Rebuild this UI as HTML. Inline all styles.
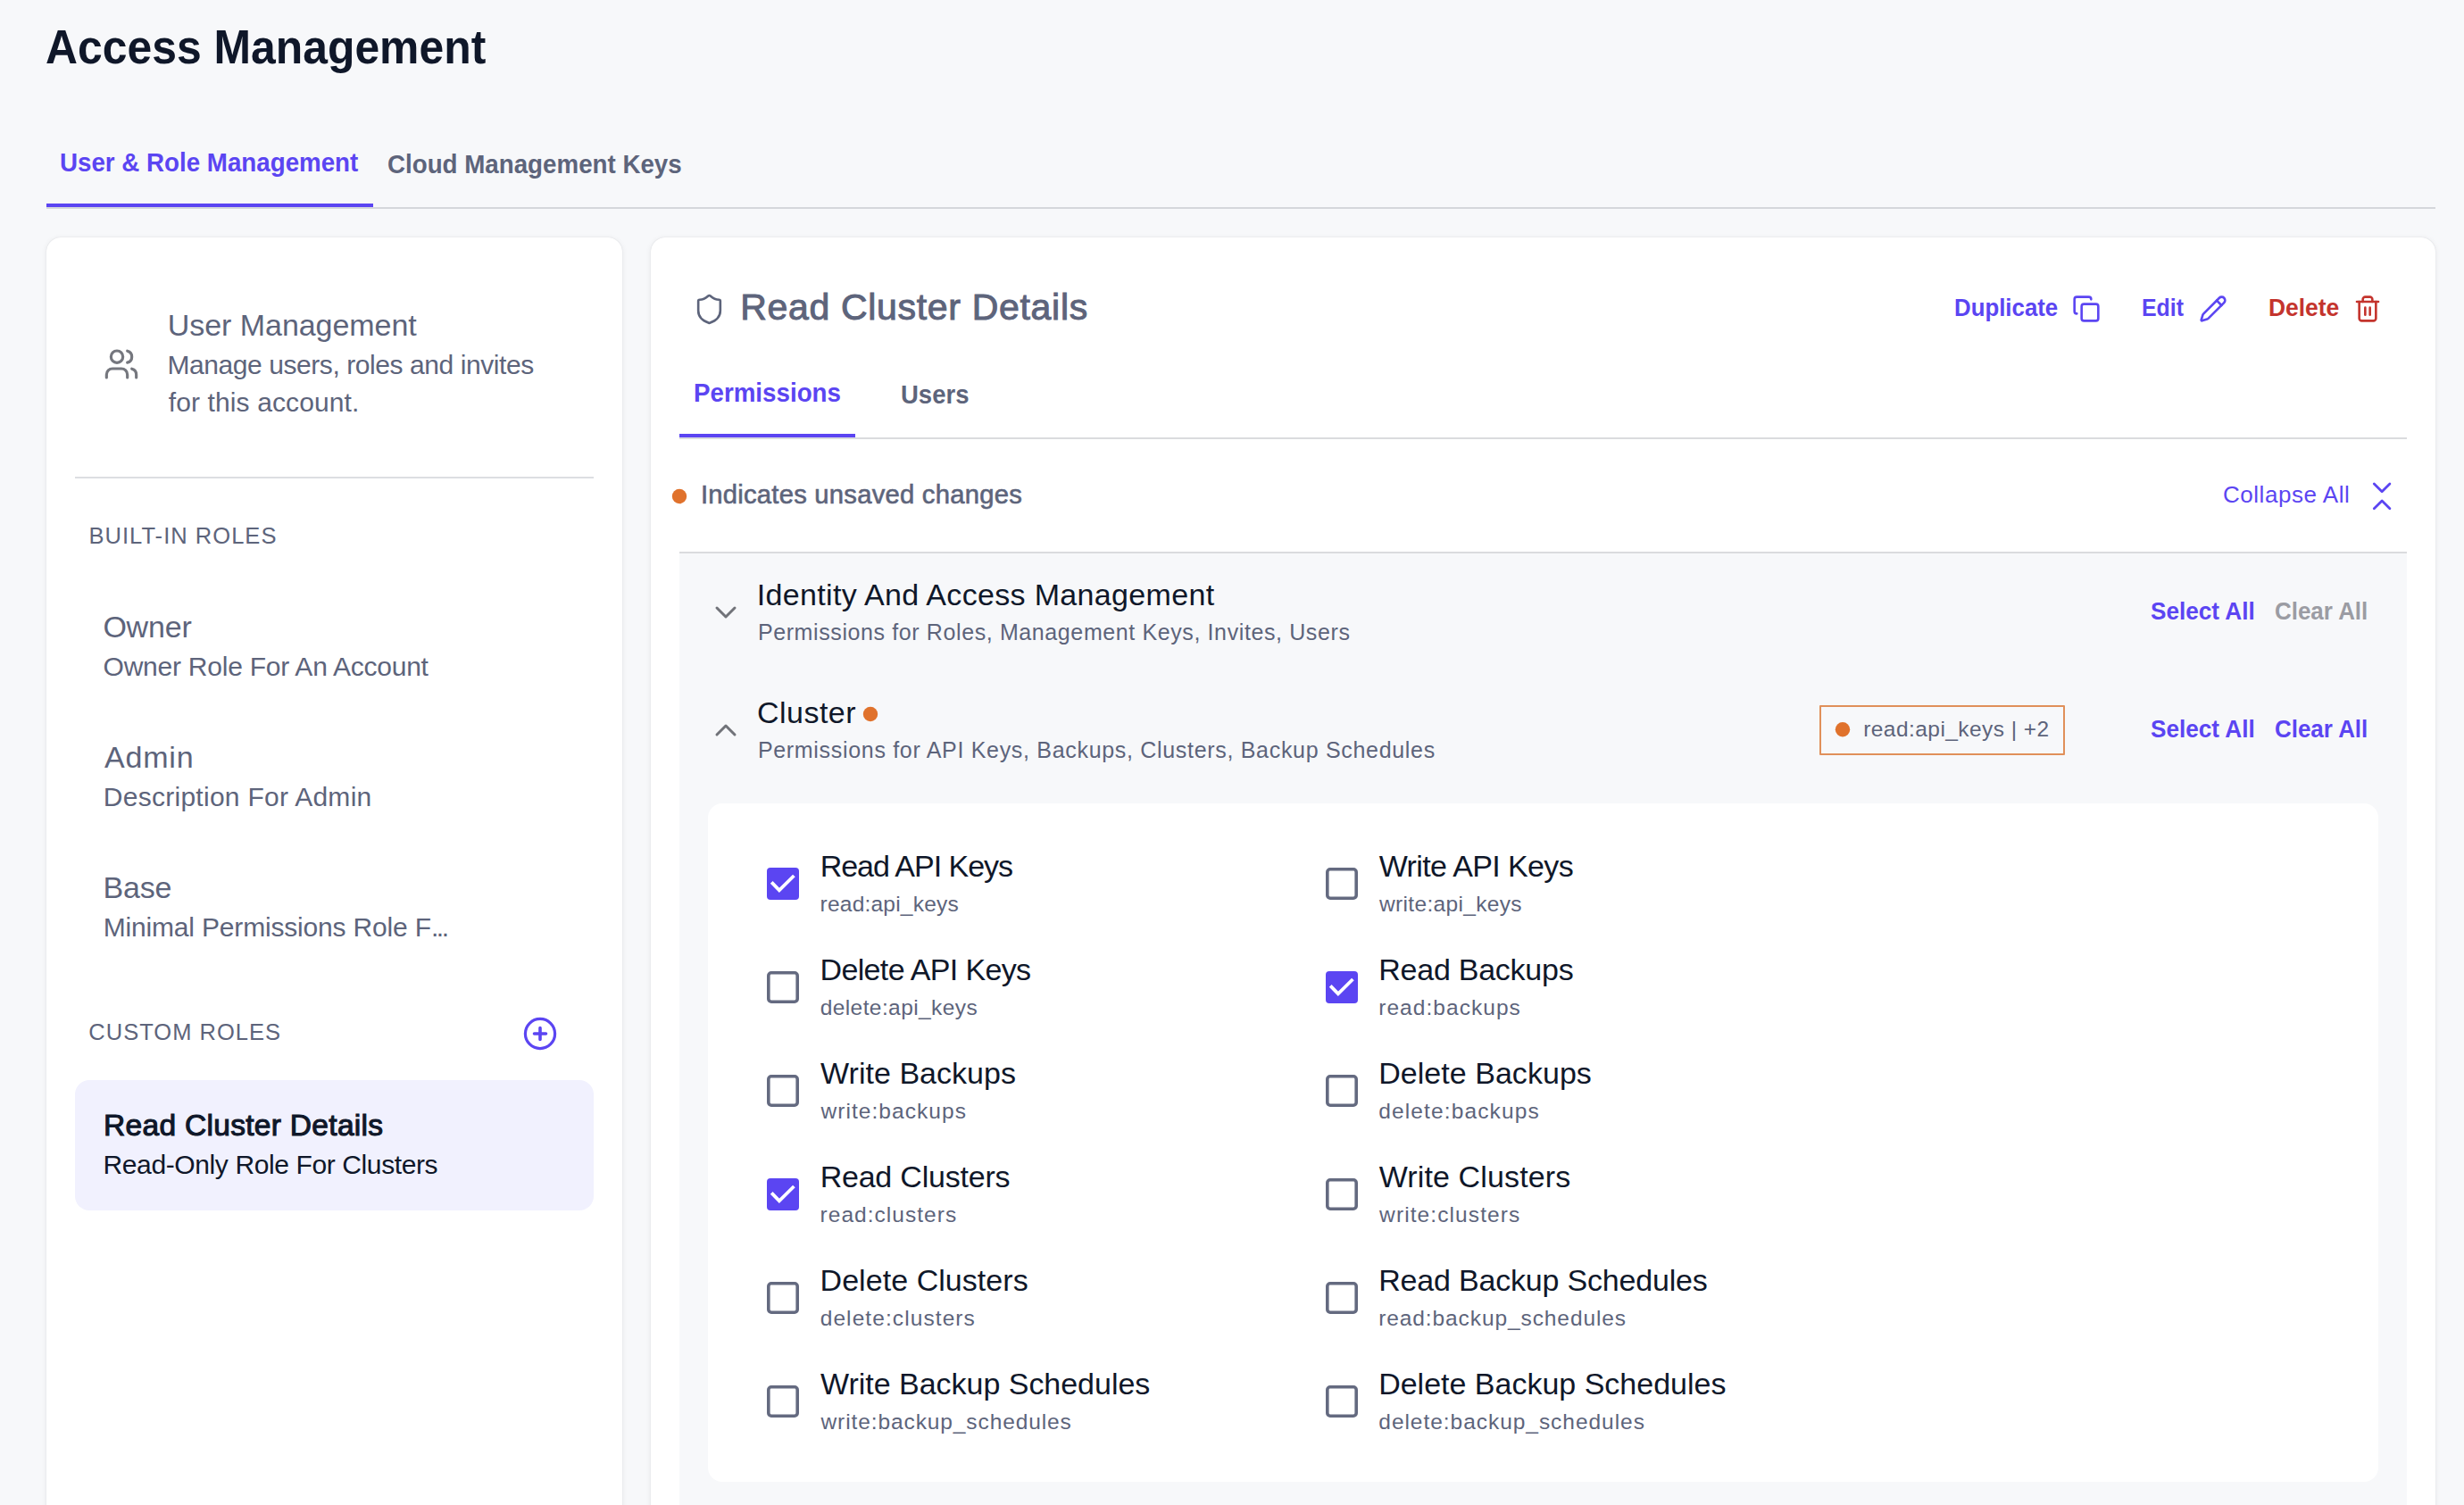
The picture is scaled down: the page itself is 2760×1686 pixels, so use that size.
<!DOCTYPE html>
<html lang="en"><head><meta charset="utf-8"><title>Access Management</title>
<style>
html,body{margin:0;padding:0;background:#f7f8fa;}
body{width:2760px;height:1686px;overflow:hidden;font-family:'Liberation Sans',Arial,Helvetica,sans-serif;}
#root{position:relative;width:2760px;height:1686px;overflow:hidden;background:#f7f8fa;}
@media (max-width:1500px){#root{zoom:.5;}body{width:1380px;height:843px;}}
.t{position:absolute;white-space:nowrap;}
</style></head><body>
<div id="root">
<div style="position:absolute;left:52px;top:232px;width:2676px;height:2px;background:#d5d7db;"></div>
<div style="position:absolute;left:52px;top:228px;width:366px;height:4px;background:#5b45f2;"></div>
<div style="position:absolute;left:52px;top:266px;width:645px;height:1500px;background:#fff;box-shadow:0 0 1px rgba(16,24,40,.16),0 1px 6px rgba(16,24,40,.08);border-radius:16px;"></div>
<div style="position:absolute;left:729px;top:266px;width:1999px;height:1500px;background:#fff;box-shadow:0 0 1px rgba(16,24,40,.16),0 1px 6px rgba(16,24,40,.08);border-radius:16px;"></div>
<div style="position:absolute;left:84px;top:534px;width:581px;height:2px;background:#dcdee2;"></div>
<div style="position:absolute;left:84px;top:1210px;width:581px;height:146px;background:#f1f1fe;border-radius:16px;"></div>
<div style="position:absolute;left:761px;top:490px;width:1935px;height:2px;background:#dadbde;"></div>
<div style="position:absolute;left:761px;top:486px;width:197px;height:4px;background:#5b45f2;"></div>
<div style="position:absolute;left:761px;top:618px;width:1935px;height:2px;background:#dadbde;"></div>
<div style="position:absolute;left:761px;top:620px;width:1935px;height:1100px;background:#f7f8fa;"></div>
<div style="position:absolute;left:793px;top:900px;width:1871px;height:760px;background:#fff;border-radius:16px;"></div>
<svg style="position:absolute;left:749px;top:544px" width="24" height="24" viewBox="749 544 24 24"><circle cx="761" cy="556" r="8.2" fill="#e0722c"/></svg>
<svg style="position:absolute;left:963px;top:788px" width="24" height="24" viewBox="963 788 24 24"><circle cx="975" cy="800" r="8.2" fill="#e0722c"/></svg>
<svg style="position:absolute;left:2052px;top:805px" width="24" height="24" viewBox="2052 805 24 24"><circle cx="2064" cy="817.2" r="8.2" fill="#e0722c"/></svg>
<div style="position:absolute;left:2038px;top:790px;width:275px;height:56px;box-sizing:border-box;border:2px solid #e0905a;border-radius:1px;"></div>
<svg style="position:absolute;left:859px;top:972px" width="36" height="36" viewBox="0 0 36 36"><rect width="36" height="36" rx="4" fill="#5b45f2"/><path d="M5.2 16.4 L13.9 25.4 L30.4 9.0" fill="none" stroke="#fff" stroke-width="3.8"/></svg>
<svg style="position:absolute;left:859px;top:1088px" width="36" height="36" viewBox="0 0 36 36"><rect x="1.8" y="1.8" width="32.4" height="32.4" rx="3.2" fill="#fff" stroke="#646a80" stroke-width="3.6"/></svg>
<svg style="position:absolute;left:859px;top:1204px" width="36" height="36" viewBox="0 0 36 36"><rect x="1.8" y="1.8" width="32.4" height="32.4" rx="3.2" fill="#fff" stroke="#646a80" stroke-width="3.6"/></svg>
<svg style="position:absolute;left:859px;top:1320px" width="36" height="36" viewBox="0 0 36 36"><rect width="36" height="36" rx="4" fill="#5b45f2"/><path d="M5.2 16.4 L13.9 25.4 L30.4 9.0" fill="none" stroke="#fff" stroke-width="3.8"/></svg>
<svg style="position:absolute;left:859px;top:1436px" width="36" height="36" viewBox="0 0 36 36"><rect x="1.8" y="1.8" width="32.4" height="32.4" rx="3.2" fill="#fff" stroke="#646a80" stroke-width="3.6"/></svg>
<svg style="position:absolute;left:859px;top:1552px" width="36" height="36" viewBox="0 0 36 36"><rect x="1.8" y="1.8" width="32.4" height="32.4" rx="3.2" fill="#fff" stroke="#646a80" stroke-width="3.6"/></svg>
<svg style="position:absolute;left:1485px;top:972px" width="36" height="36" viewBox="0 0 36 36"><rect x="1.8" y="1.8" width="32.4" height="32.4" rx="3.2" fill="#fff" stroke="#646a80" stroke-width="3.6"/></svg>
<svg style="position:absolute;left:1485px;top:1088px" width="36" height="36" viewBox="0 0 36 36"><rect width="36" height="36" rx="4" fill="#5b45f2"/><path d="M5.2 16.4 L13.9 25.4 L30.4 9.0" fill="none" stroke="#fff" stroke-width="3.8"/></svg>
<svg style="position:absolute;left:1485px;top:1204px" width="36" height="36" viewBox="0 0 36 36"><rect x="1.8" y="1.8" width="32.4" height="32.4" rx="3.2" fill="#fff" stroke="#646a80" stroke-width="3.6"/></svg>
<svg style="position:absolute;left:1485px;top:1320px" width="36" height="36" viewBox="0 0 36 36"><rect x="1.8" y="1.8" width="32.4" height="32.4" rx="3.2" fill="#fff" stroke="#646a80" stroke-width="3.6"/></svg>
<svg style="position:absolute;left:1485px;top:1436px" width="36" height="36" viewBox="0 0 36 36"><rect x="1.8" y="1.8" width="32.4" height="32.4" rx="3.2" fill="#fff" stroke="#646a80" stroke-width="3.6"/></svg>
<svg style="position:absolute;left:1485px;top:1552px" width="36" height="36" viewBox="0 0 36 36"><rect x="1.8" y="1.8" width="32.4" height="32.4" rx="3.2" fill="#fff" stroke="#646a80" stroke-width="3.6"/></svg>
<svg style="position:absolute;left:116px;top:387.5px" width="40" height="40" viewBox="0 0 24 24" fill="none" stroke="#75777e" stroke-width="1.9" stroke-linecap="round" stroke-linejoin="round"><path d="M16 21v-2a4 4 0 0 0-4-4H6a4 4 0 0 0-4 4v2"/><circle cx="9" cy="7" r="4"/><path d="M22 21v-2a4 4 0 0 0-3-3.87"/><path d="M16 3.13a4 4 0 0 1 0 7.75"/></svg>
<svg style="position:absolute;left:776.2px;top:327.8px" width="37" height="37" viewBox="0 0 24 24" fill="none" stroke="#5d647b" stroke-width="1.7" stroke-linecap="round" stroke-linejoin="round"><path d="M20 13c0 5-3.5 7.5-7.66 8.95a1 1 0 0 1-.67-.01C7.5 20.5 4 18 4 13V6a1 1 0 0 1 1-1c2 0 4.5-1.2 6.24-2.72a1.17 1.17 0 0 1 1.52 0C14.51 3.81 17 5 19 5a1 1 0 0 1 1 1z"/></svg>
<svg style="position:absolute;left:2321px;top:330px" width="32" height="32" viewBox="0 0 24 24" fill="none" stroke="#5b45f2" stroke-width="1.95" stroke-linecap="round" stroke-linejoin="round"><rect width="14" height="14" x="8" y="8" rx="2" ry="2"/><path d="M4 16c-1.1 0-2-.9-2-2V4c0-1.1.9-2 2-2h10c1.1 0 2 .9 2 2"/></svg>
<svg style="position:absolute;left:2463px;top:330px" width="32" height="32" viewBox="0 0 24 24" fill="none" stroke="#5b45f2" stroke-width="1.95" stroke-linecap="round" stroke-linejoin="round"><path d="M21.174 6.812a1 1 0 0 0-3.986-3.987L3.842 16.174a2 2 0 0 0-.5.83l-1.321 4.352a.5.5 0 0 0 .623.622l4.353-1.32a2 2 0 0 0 .83-.497z"/><path d="m15 5 4 4"/></svg>
<svg style="position:absolute;left:2635.6px;top:330px" width="32" height="32" viewBox="0 0 24 24" fill="none" stroke="#c4342d" stroke-width="1.95" stroke-linecap="round" stroke-linejoin="round"><path d="M3 6h18"/><path d="M19 6v14c0 1-1 2-2 2H7c-1 0-2-1-2-2V6"/><path d="M8 6V4c0-1 1-2 2-2h4c1 0 2 1 2 2v2"/><line x1="10" x2="10" y1="11" y2="17"/><line x1="14" x2="14" y1="11" y2="17"/></svg>
<svg style="position:absolute;left:2648px;top:536px" width="40" height="40" viewBox="2648 536 40 40" fill="none" stroke="#5b45f2" stroke-width="2.8" stroke-linecap="round" stroke-linejoin="round"><path d="M2659.3 542 L2668.1 550.8 L2676.9 542"/><path d="M2659.3 569.8 L2668.1 561 L2676.9 569.8"/></svg>
<svg style="position:absolute;left:793px;top:666px" width="40" height="40" viewBox="0 0 24 24" fill="none" stroke="#717379" stroke-width="1.8" stroke-linecap="round" stroke-linejoin="round"><path d="m6 9 6 6 6-6"/></svg>
<svg style="position:absolute;left:793px;top:798px" width="40" height="40" viewBox="0 0 24 24" fill="none" stroke="#717379" stroke-width="1.8" stroke-linecap="round" stroke-linejoin="round"><path d="m18 15-6-6-6 6"/></svg>
<svg style="position:absolute;left:585px;top:1138px" width="40" height="40" viewBox="0 0 40 40" fill="none" stroke="#5b45f2" stroke-width="3.2" stroke-linecap="round"><circle cx="20" cy="20" r="16.6"/><path stroke-width="3.6" d="M13.5 20h13M20 13.5v13"/></svg>
<div class="t" style="left:50.91px;top:26px;font:700 53px/1 'Liberation Sans',Arial,Helvetica,sans-serif;color:#0f1729;transform:scaleX(0.9407);transform-origin:0 0;">Access Management</div>
<div class="t" style="left:67.23px;top:168px;font:700 29px/1 'Liberation Sans',Arial,Helvetica,sans-serif;color:#5b45f2;transform:scaleX(0.9559);transform-origin:0 0;">User &amp; Role Management</div>
<div class="t" style="left:434.32px;top:170px;font:700 29px/1 'Liberation Sans',Arial,Helvetica,sans-serif;color:#5d647b;transform:scaleX(0.9561);transform-origin:0 0;">Cloud Management Keys</div>
<div class="t" style="left:187.78px;top:347px;font:400 34px/1 'Liberation Sans',Arial,Helvetica,sans-serif;color:#5d647b;letter-spacing:-0.048px;">User Management</div>
<div class="t" style="left:187.4px;top:394px;font:400 30px/1 'Liberation Sans',Arial,Helvetica,sans-serif;color:#5d647b;letter-spacing:-0.423px;">Manage users, roles and invites</div>
<div class="t" style="left:188.82px;top:436px;font:400 30px/1 'Liberation Sans',Arial,Helvetica,sans-serif;color:#5d647b;letter-spacing:0.109px;">for this account.</div>
<div class="t" style="left:99.47px;top:588px;font:400 25.5px/1 'Liberation Sans',Arial,Helvetica,sans-serif;color:#5d647b;letter-spacing:1.035px;">BUILT-IN ROLES</div>
<div class="t" style="left:115.38px;top:685px;font:400 34px/1 'Liberation Sans',Arial,Helvetica,sans-serif;color:#5d647b;letter-spacing:-0.2px;">Owner</div>
<div class="t" style="left:115.62px;top:732px;font:400 30px/1 'Liberation Sans',Arial,Helvetica,sans-serif;color:#5d647b;letter-spacing:-0.243px;">Owner Role For An Account</div>
<div class="t" style="left:116.97px;top:831px;font:400 34px/1 'Liberation Sans',Arial,Helvetica,sans-serif;color:#5d647b;letter-spacing:0.819px;">Admin</div>
<div class="t" style="left:115.8px;top:878px;font:400 30px/1 'Liberation Sans',Arial,Helvetica,sans-serif;color:#5d647b;letter-spacing:0.267px;">Description For Admin</div>
<div class="t" style="left:115.45px;top:977px;font:400 34px/1 'Liberation Sans',Arial,Helvetica,sans-serif;color:#5d647b;letter-spacing:-0.15px;">Base</div>
<div class="t" style="left:115.7px;top:1024px;font:400 30px/1 'Liberation Sans',Arial,Helvetica,sans-serif;color:#5d647b;letter-spacing:-0.175px;">Minimal Permissions Role F<span style="letter-spacing:-2.4px">...</span></div>
<div class="t" style="left:99.35px;top:1144px;font:400 25.5px/1 'Liberation Sans',Arial,Helvetica,sans-serif;color:#5d647b;letter-spacing:1.007px;">CUSTOM ROLES</div>
<div class="t" style="left:116.1px;top:1244px;font:400 33.5px/1 'Liberation Sans',Arial,Helvetica,sans-serif;color:#0f1729;letter-spacing:0.303px;-webkit-text-stroke:1.1px #0f1729;">Read Cluster Details</div>
<div class="t" style="left:115.5px;top:1290px;font:400 30px/1 'Liberation Sans',Arial,Helvetica,sans-serif;color:#0f1729;letter-spacing:-0.385px;">Read-Only Role For Clusters</div>
<div class="t" style="left:829.23px;top:324px;font:400 41px/1 'Liberation Sans',Arial,Helvetica,sans-serif;color:#5d647b;letter-spacing:0.683px;-webkit-text-stroke:1.0px #5d647b;">Read Cluster Details</div>
<div class="t" style="left:2188.84px;top:331px;font:700 27.5px/1 'Liberation Sans',Arial,Helvetica,sans-serif;color:#5b45f2;transform:scaleX(0.9388);transform-origin:0 0;">Duplicate</div>
<div class="t" style="left:2399.1px;top:331px;font:700 27.5px/1 'Liberation Sans',Arial,Helvetica,sans-serif;color:#5b45f2;transform:scaleX(0.9045);transform-origin:0 0;">Edit</div>
<div class="t" style="left:2540.6px;top:331px;font:700 27.5px/1 'Liberation Sans',Arial,Helvetica,sans-serif;color:#c4342d;transform:scaleX(0.9605);transform-origin:0 0;">Delete</div>
<div class="t" style="left:776.71px;top:426px;font:700 29px/1 'Liberation Sans',Arial,Helvetica,sans-serif;color:#5b45f2;transform:scaleX(0.9563);transform-origin:0 0;">Permissions</div>
<div class="t" style="left:1009.04px;top:428px;font:700 29px/1 'Liberation Sans',Arial,Helvetica,sans-serif;color:#5d647b;transform:scaleX(0.9479);transform-origin:0 0;">Users</div>
<div class="t" style="left:784.88px;top:540px;font:400 29.2px/1 'Liberation Sans',Arial,Helvetica,sans-serif;color:#5d647b;letter-spacing:0.255px;-webkit-text-stroke:0.6px #5d647b;">Indicates unsaved changes</div>
<div class="t" style="left:2489.95px;top:541px;font:400 26px/1 'Liberation Sans',Arial,Helvetica,sans-serif;color:#5b45f2;letter-spacing:0.539px;">Collapse All</div>
<div class="t" style="left:847.77px;top:649px;font:400 34px/1 'Liberation Sans',Arial,Helvetica,sans-serif;color:#0f1729;letter-spacing:0.331px;">Identity And Access Management</div>
<div class="t" style="left:848.9px;top:696px;font:400 25px/1 'Liberation Sans',Arial,Helvetica,sans-serif;color:#5d647b;letter-spacing:0.608px;">Permissions for Roles, Management Keys, Invites, Users</div>
<div class="t" style="left:2409.29px;top:671px;font:700 27.5px/1 'Liberation Sans',Arial,Helvetica,sans-serif;color:#5b45f2;transform:scaleX(0.9507);transform-origin:0 0;">Select All</div>
<div class="t" style="left:2547.54px;top:671px;font:700 27.5px/1 'Liberation Sans',Arial,Helvetica,sans-serif;color:#9b9ca3;transform:scaleX(0.9433);transform-origin:0 0;">Clear All</div>
<div class="t" style="left:848.05px;top:781px;font:400 34px/1 'Liberation Sans',Arial,Helvetica,sans-serif;color:#0f1729;letter-spacing:0.471px;">Cluster</div>
<div class="t" style="left:848.9px;top:828px;font:400 25px/1 'Liberation Sans',Arial,Helvetica,sans-serif;color:#5d647b;letter-spacing:0.688px;">Permissions for API Keys, Backups, Clusters, Backup Schedules</div>
<div class="t" style="left:2087.18px;top:805px;font:400 24.5px/1 'Liberation Sans',Arial,Helvetica,sans-serif;color:#5d647b;letter-spacing:0.446px;">read:api_keys | +2</div>
<div class="t" style="left:2409.29px;top:803px;font:700 27.5px/1 'Liberation Sans',Arial,Helvetica,sans-serif;color:#5b45f2;transform:scaleX(0.9507);transform-origin:0 0;">Select All</div>
<div class="t" style="left:2547.54px;top:803px;font:700 27.5px/1 'Liberation Sans',Arial,Helvetica,sans-serif;color:#5b45f2;transform:scaleX(0.9433);transform-origin:0 0;">Clear All</div>
<div class="t" style="left:918.65px;top:953px;font:400 34px/1 'Liberation Sans',Arial,Helvetica,sans-serif;color:#0f1729;letter-spacing:-1.029px;">Read API Keys</div>
<div class="t" style="left:918.58px;top:1001px;font:400 24.5px/1 'Liberation Sans',Arial,Helvetica,sans-serif;color:#5d647b;letter-spacing:0.217px;">read:api_keys</div>
<div class="t" style="left:918.55px;top:1069px;font:400 34px/1 'Liberation Sans',Arial,Helvetica,sans-serif;color:#0f1729;letter-spacing:-0.654px;">Delete API Keys</div>
<div class="t" style="left:918.7px;top:1117px;font:400 24.5px/1 'Liberation Sans',Arial,Helvetica,sans-serif;color:#5d647b;letter-spacing:0.409px;">delete:api_keys</div>
<div class="t" style="left:919.08px;top:1185px;font:400 34px/1 'Liberation Sans',Arial,Helvetica,sans-serif;color:#0f1729;letter-spacing:0.029px;">Write Backups</div>
<div class="t" style="left:919.5px;top:1233px;font:400 24.5px/1 'Liberation Sans',Arial,Helvetica,sans-serif;color:#5d647b;letter-spacing:1.052px;">write:backups</div>
<div class="t" style="left:918.65px;top:1301px;font:400 34px/1 'Liberation Sans',Arial,Helvetica,sans-serif;color:#0f1729;letter-spacing:-0.215px;">Read Clusters</div>
<div class="t" style="left:918.58px;top:1349px;font:400 24.5px/1 'Liberation Sans',Arial,Helvetica,sans-serif;color:#5d647b;letter-spacing:1.029px;">read:clusters</div>
<div class="t" style="left:918.55px;top:1417px;font:400 34px/1 'Liberation Sans',Arial,Helvetica,sans-serif;color:#0f1729;letter-spacing:0.052px;">Delete Clusters</div>
<div class="t" style="left:918.7px;top:1465px;font:400 24.5px/1 'Liberation Sans',Arial,Helvetica,sans-serif;color:#5d647b;letter-spacing:1.084px;">delete:clusters</div>
<div class="t" style="left:919.08px;top:1533px;font:400 34px/1 'Liberation Sans',Arial,Helvetica,sans-serif;color:#0f1729;letter-spacing:-0.027px;">Write Backup Schedules</div>
<div class="t" style="left:919.5px;top:1581px;font:400 24.5px/1 'Liberation Sans',Arial,Helvetica,sans-serif;color:#5d647b;letter-spacing:0.899px;">write:backup_schedules</div>
<div class="t" style="left:1544.68px;top:953px;font:400 34px/1 'Liberation Sans',Arial,Helvetica,sans-serif;color:#0f1729;letter-spacing:-0.627px;">Write API Keys</div>
<div class="t" style="left:1545.1px;top:1001px;font:400 24.5px/1 'Liberation Sans',Arial,Helvetica,sans-serif;color:#5d647b;letter-spacing:0.325px;">write:api_keys</div>
<div class="t" style="left:1544.25px;top:1069px;font:400 34px/1 'Liberation Sans',Arial,Helvetica,sans-serif;color:#0f1729;letter-spacing:-0.248px;">Read Backups</div>
<div class="t" style="left:1544.18px;top:1117px;font:400 24.5px/1 'Liberation Sans',Arial,Helvetica,sans-serif;color:#5d647b;letter-spacing:1.052px;">read:backups</div>
<div class="t" style="left:1544.15px;top:1185px;font:400 34px/1 'Liberation Sans',Arial,Helvetica,sans-serif;color:#0f1729;letter-spacing:0.044px;">Delete Backups</div>
<div class="t" style="left:1544.3px;top:1233px;font:400 24.5px/1 'Liberation Sans',Arial,Helvetica,sans-serif;color:#5d647b;letter-spacing:1.125px;">delete:backups</div>
<div class="t" style="left:1544.68px;top:1301px;font:400 34px/1 'Liberation Sans',Arial,Helvetica,sans-serif;color:#0f1729;letter-spacing:0.131px;">Write Clusters</div>
<div class="t" style="left:1545.1px;top:1349px;font:400 24.5px/1 'Liberation Sans',Arial,Helvetica,sans-serif;color:#5d647b;letter-spacing:1.098px;">write:clusters</div>
<div class="t" style="left:1544.25px;top:1417px;font:400 34px/1 'Liberation Sans',Arial,Helvetica,sans-serif;color:#0f1729;letter-spacing:-0.194px;">Read Backup Schedules</div>
<div class="t" style="left:1544.18px;top:1465px;font:400 24.5px/1 'Liberation Sans',Arial,Helvetica,sans-serif;color:#5d647b;letter-spacing:0.907px;">read:backup_schedules</div>
<div class="t" style="left:1544.15px;top:1533px;font:400 34px/1 'Liberation Sans',Arial,Helvetica,sans-serif;color:#0f1729;letter-spacing:-0.003px;">Delete Backup Schedules</div>
<div class="t" style="left:1544.3px;top:1581px;font:400 24.5px/1 'Liberation Sans',Arial,Helvetica,sans-serif;color:#5d647b;letter-spacing:0.958px;">delete:backup_schedules</div>
</div>
</body></html>
